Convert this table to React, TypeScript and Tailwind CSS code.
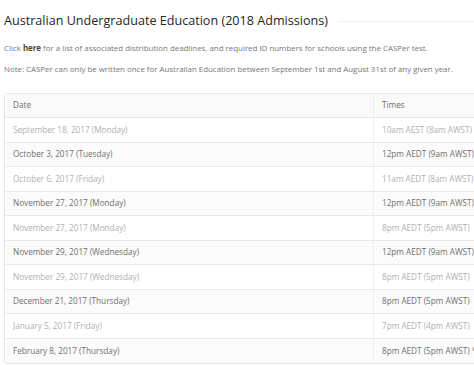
import React from "react";

const rows: { date: string; time: string }[] = [
  { date: "September 18, 2017 (Monday)", time: "10am AEST (8am AWST)" },
  { date: "October 3, 2017 (Tuesday)", time: "12pm AEDT (9am AWST)" },
  { date: "October 6, 2017 (Friday)", time: "11am AEDT (8am AWST)" },
  { date: "November 27, 2017 (Monday)", time: "12pm AEDT (9am AWST)" },
  { date: "November 27, 2017 (Monday)", time: "8pm AEDT (5pm AWST)" },
  { date: "November 29, 2017 (Wednesday)", time: "12pm AEDT (9am AWST)" },
  { date: "November 29, 2017 (Wednesday)", time: "8pm AEDT (5pm AWST)" },
  { date: "December 21, 2017 (Thursday)", time: "8pm AEDT (5pm AWST)" },
  { date: "January 5, 2017 (Friday)", time: "7pm AEDT (4pm AWST)" },
  { date: "February 8, 2017 (Thursday)", time: "8pm AEDT (5pm AWST) *n" },
];

const App = () => {
  return (
    <div
      className="w-[474px] h-[365px] overflow-hidden bg-white pl-[4px]"
      style={{ fontFamily: '"Open Sans", sans-serif' }}
    >
      <div className="flex items-center pt-[11px]">
        <h1 className="text-[12.6px] leading-[20px] text-[#262626] whitespace-nowrap">
          Australian Undergraduate Education (2018 Admissions)
        </h1>
        <div className="flex-1 h-px bg-[#eeeeee] ml-[10px]" />
      </div>
      <p className="mt-[11px] text-[7.9px] leading-[12px] text-[#777] whitespace-nowrap">
        Click <span className="font-bold text-[#444]">here</span> for a list of
        associated distribution deadlines, and required ID numbers for schools
        using the CASPer test.
      </p>
      <p className="mt-[9px] text-[7.9px] leading-[12px] text-[#777] whitespace-nowrap">
        Note: CASPer can only be written once for Australian Education between
        September 1st and August 31st of any given year.
      </p>
      <div className="mt-[18px] w-[540px] border border-[#e6e6e6] rounded-[3px] overflow-hidden text-[8.2px]">
        <div className="grid grid-cols-[369px_1fr] h-[24px] bg-[#fafafa] border-b border-[#e6e6e6] text-[#6a6a6a]">
          <div className="px-[8px] flex items-center border-r border-[#eeeeee]">Date</div>
          <div className="px-[8px] flex items-center">Times</div>
        </div>
        {rows.map((r, i) => (
          <div
            key={i}
            className={`grid grid-cols-[369px_1fr] h-[24.5px] ${
              i < rows.length - 1 ? "border-b border-[#e9e9e9]" : ""
            } ${i % 2 === 0 ? "bg-white text-[#b0b0b0]" : "bg-[#fbfbfb] text-[#707070]"}`}
          >
            <div className="px-[8px] flex items-center border-r border-[#eeeeee]">{r.date}</div>
            <div className="px-[8px] flex items-center whitespace-nowrap">{r.time}</div>
          </div>
        ))}
      </div>
    </div>
  );
};

export default App;
